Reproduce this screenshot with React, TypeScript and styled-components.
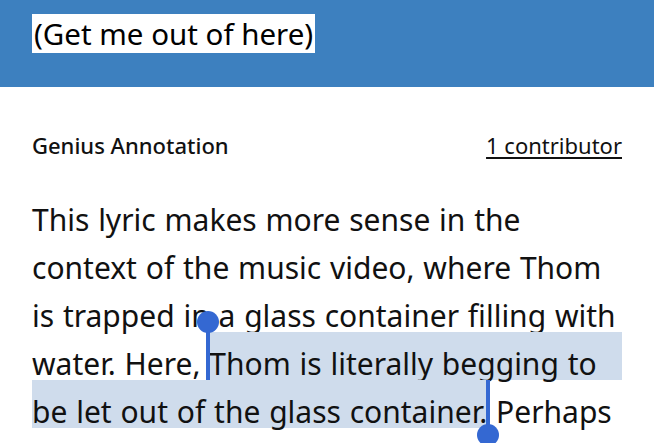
import React from "react";
import styled, { createGlobalStyle } from "styled-components";

const GlobalStyle = createGlobalStyle`
    html, body {
        margin: 0;
        padding: 0;
        background: #ffffff;
        overflow: hidden;
    }
    body {
        font-family: "Noto Sans", Lato, sans-serif;
        color: #111111;
    }
`;

const Page = styled.div`
    width: 654px;
    height: 443px;
    overflow: hidden;
    background: #ffffff;
`;

const LyricBar = styled.header`
    height: 87px;
    background: #3d80bf;
    padding: 14px 0 0 32px;
    box-sizing: border-box;
`;

const HighlightedLyric = styled.span`
    display: inline-block;
    background: #ffffff;
    color: #000000;
    font-size: 29.5px;
    line-height: 39px;
    padding: 0 2px;
`;

const Annotation = styled.section`
    padding: 44px 32px 0 32px;
`;

const MetaRow = styled.div`
    display: flex;
    justify-content: space-between;
    align-items: center;
    font-size: 22px;
    line-height: 28px;
`;

const Label = styled.span`
    font-weight: 500;
`;

const Contributors = styled.a`
    color: #111111;
    text-decoration: underline;
    text-underline-offset: 3px;
`;

const Body = styled.div`
    margin-top: 29px;
    font-size: 30px;
    word-spacing: 1px;
`;

const Line = styled.div`
    display: flex;
    height: 48px;
    box-sizing: border-box;
    padding-top: 15px;
    line-height: 33px;
    white-space: pre;
`;

const Selected = styled.span<{ $fill?: boolean }>`
    position: relative;
    margin-top: -15px;
    padding-top: 15px;
    background: #cfdcec;
    flex: ${p => (p.$fill ? "1" : "0 0 auto")};
`;

const Handle = styled.span<{ $side: "start" | "end" }>`
    position: absolute;
    width: 4px;
    background: #3468d2;
    ${p =>
        p.$side === "start"
            ? `left: -3px; top: -10px; bottom: 0;`
            : `right: -3px; top: 0; height: 55px;`}

    &::after {
        content: "";
        position: absolute;
        left: -9px;
        width: 22px;
        height: 22px;
        border-radius: 50%;
        background: #3468d2;
        ${p => (p.$side === "start" ? `top: -11px;` : `bottom: -11px;`)}
    }
`;

export default function App() {
    return (
        <Page>
            <GlobalStyle />
            <LyricBar>
                <HighlightedLyric>(Get me out of here)</HighlightedLyric>
            </LyricBar>
            <Annotation>
                <MetaRow>
                    <Label>Genius Annotation</Label>
                    <Contributors href="#">1 contributor</Contributors>
                </MetaRow>
                <Body>
                    <Line>This lyric makes more sense in the</Line>
                    <Line>context of the music video, where Thom</Line>
                    <Line>is trapped in a glass container filling with</Line>
                    <Line>
                        {"water. Here, "}
                        <Selected $fill>
                            <Handle $side="start" />
                            Thom is literally begging to
                        </Selected>
                    </Line>
                    <Line>
                        <Selected>
                            be let out of the glass container.
                            <Handle $side="end" />
                        </Selected>
                        {" Perhaps"}
                    </Line>
                </Body>
            </Annotation>
        </Page>
    );
}
